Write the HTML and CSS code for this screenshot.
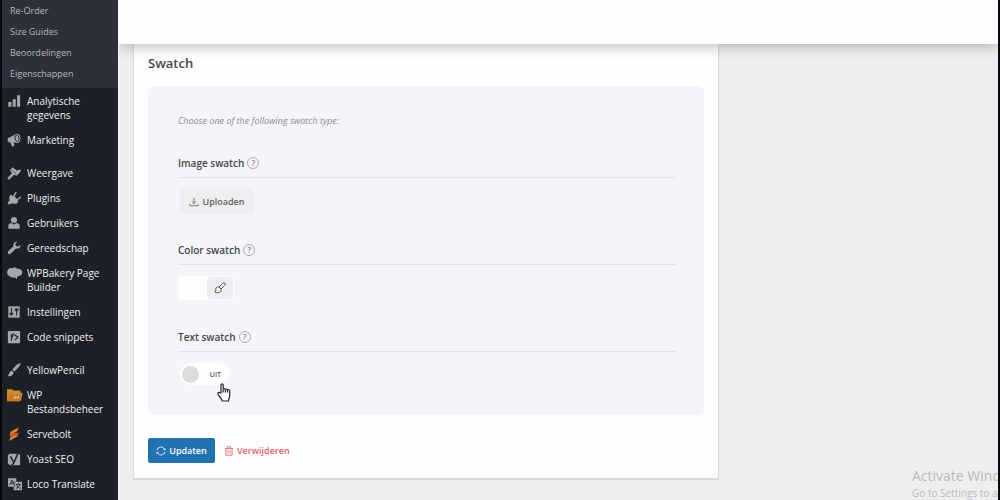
FILE: index.html
```html
<!DOCTYPE html>
<html lang="nl">
<head>
<meta charset="utf-8">
<title>Swatch</title>
<link rel="stylesheet" href="styles.css">
</head>
<body>
<div class="app">
  <nav class="sidebar" aria-label="Beheermenu">
    <ul class="submenu">
      <li><a href="#">Re-Order</a></li>
      <li><a href="#">Size Guides</a></li>
      <li><a href="#">Beoordelingen</a></li>
      <li><a href="#">Eigenschappen</a></li>
    </ul>
    <ul class="menu">
      <li><a href="#"><svg class="icon" viewBox="0 0 16 16"><path d="M1.500 9h3.500v5.500h-3.500zM6.500 6h3.500v8.500h-3.500zM11.500 1.500h3.500v13h-3.500z"/></svg><span>Analytische gegevens</span></a></li>
      <li><a href="#"><svg class="icon" viewBox="0 0 16 16"><path d="M1 6 10.500 1c3-.5 5 2 5 5s-1.500 5.500-4 5.500L7.500 10.500l1 4-2.800.8L4 10.800C1.500 11.500-.2 8 1 6z"/><ellipse cx="11.500" cy="6" rx="2.300" ry="3.700" transform="rotate(-12 11.500 6)" fill="none" stroke="#1d2127" stroke-width="1"/><path d="M10.500 5l2 .3v1.600l-1.700.3z"/></svg><span>Marketing</span></a></li>
      <li class="group-start"><a href="#"><svg class="icon" viewBox="0 0 16 16"><path d="M6.500 1.500 9 3.500 11 5l4-1 1 1.500-4.500 5.500-2-.5-1.500-.5L3 15c-1.500 1-3-.5-2-2l4.500-4.500-1-2L3.500 4.500z"/><path d="m5 4.500 6 5" stroke="#1d2127" stroke-width=".6"/></svg><span>Weergave</span></a></li>
      <li><a href="#"><svg class="icon" viewBox="0 0 16 16"><path d="m4 4 2.500 2 3-4.500c1-.8 2 .2 1.400 1.100L8.500 6l3 3 3.200-2.500c1-.6 1.800.6 1 1.400L12 10.500l1 2c-2.500 2.500-5 2.500-7 1.500L2 15.500.5 14 3 10.500C2 8 2.500 6 4 4z"/></svg><span>Plugins</span></a></li>
      <li><a href="#"><svg class="icon" viewBox="0 0 16 16"><circle cx="8" cy="4.500" r="3.500"/><path d="M1.500 14.500V11c0-2 2-3 4-3L8 10l2.500-2c2 0 4 1 4 3v3.500z"/></svg><span>Gebruikers</span></a></li>
      <li><a href="#"><svg class="icon" viewBox="0 0 16 16"><path d="M15.500 4.500c.3 3-2.500 5-5.300 4.200L4 14.700c-1.500 1.200-4-.8-2.800-2.700l6.200-6C6.500 3.200 8.800.3 11.800.8L9.500 3.500l.7 2.200 2.300.7z"/></svg><span>Gereedschap</span></a></li>
      <li><a href="#"><svg class="icon icon-wide" viewBox="0 0 18 16"><path d="M0 7c0-3 3-5.500 6-4.500 2-1.500 4.500-1 5.500.8 3-.3 6 1.500 5.800 4.200-.3 3-2.800 4.500-5.300 4L11 15l-2-2C5 13.500 0 11.500 0 7z"/></svg><span>WPBakery Page Builder</span></a></li>
      <li><a href="#"><svg class="icon" viewBox="0 0 16 16"><path d="M1.500 1.500h13v13h-13z"/><path d="M5 3.500v8M3 9l2 2.500L7 9M8.500 6h5M11 4v8M9 4.500h4" fill="none" stroke="#1d2127" stroke-width="1.200"/></svg><span>Instellingen</span></a></li>
      <li><a href="#"><svg class="icon" viewBox="0 0 16 16"><rect x="1" y="1" width="14" height="14" rx="1"/><path d="M7.500 3.500 4.500 12.500M8 5.500l4.500 2.500L9 11.500M5 4.500v4" fill="none" stroke="#1d2127" stroke-width="1.300"/></svg><span>Code snippets</span></a></li>
      <li class="group-start"><a href="#"><svg class="icon" viewBox="0 0 16 16"><path d="M15.500.5c1 1-5.500 8.500-7.500 9L6 8C7.500 5.500 13.500-.5 15.500.5zM5.500 8.800 7.500 10.500C7.500 14 4 16 .5 15c2.200-1 1.500-5.500 5-6.200z"/></svg><span>YellowPencil</span></a></li>
      <li><a href="#"><svg class="icon icon-folder" viewBox="0 0 18 16"><path d="M0 1h6l1 1.500h8v2.500h2.500l-2 8.500-2 1H0z" fill="#d38a2d"/><path d="m0 14 3-7h14.500l-2 6.500-2 1H0z" fill="#c77a22"/><path d="m8 8 1 3.500 1.500-2.500 1.500 2.500L13.500 8" fill="none" stroke="#e9ca9c"/></svg><span>WP Bestandsbeheer</span></a></li>
      <li><a href="#"><svg class="icon" viewBox="0 0 16 16"><path d="M13 .5 4 5.500 3 9.500l9-5zM13 6.500 4 11.500l-1.500 4.500L12 10.500z" fill="#e9822b"/><path d="m3.500 7 9.500-.5-.8 3.500-9 .5z" fill="#c65d22"/></svg><span>Servebolt</span></a></li>
      <li><a href="#"><svg class="icon" viewBox="0 0 16 16"><path d="M3 2h9.500l2.500 1v12H3.500L1 13V4z"/><path d="m4 5 3.200 6M12.800.5 8 12c-.7 1.800-1.500 2.500-3 2.500" fill="none" stroke="#1d2127" stroke-width="1.800"/></svg><span>Yoast SEO</span></a></li>
      <li><a href="#"><svg class="icon icon-wide" viewBox="0 0 18 16"><path d="M1 1.500h9.500V5H8v6H1z"/><path d="m3 9 2.500-5.500L8 9M4 7h3" fill="none" stroke="#1d2127"/><path d="M8.500 5.500H17v9.500H7.500v-3.500h1z"/><path d="M10 8.500h5.500M12.800 7v1.500M14.500 9c-.7 2-2.500 3.500-4.500 4M11 9.500c.7 1.500 2.500 3 4.500 3.500" fill="none" stroke="#1d2127"/></svg><span>Loco Translate</span></a></li>
    </ul>
  </nav>

  <main class="main">
    <header class="topbar"></header>
    <form class="card">
      <h1 class="card-title">Swatch</h1>
      <div class="panel">
        <p class="intro">Choose one of the following swatch type:</p>
        <section class="field">
          <h2 class="field-title">Image swatch <button type="button" class="help" aria-label="Help bij Image swatch">?</button></h2>
          <div class="field-body inset">
            <button type="button" class="upload"><svg class="line-icon" viewBox="0 0 12 12"><path d="M6 1v7M3.500 5.500 6 8l2.500-2.500M1 8.500v2h10v-2"/></svg>Uploaden</button>
          </div>
        </section>
        <section class="field">
          <h2 class="field-title">Color swatch <button type="button" class="help" aria-label="Help bij Color swatch">?</button></h2>
          <div class="field-body">
            <div class="color-picker">
              <button type="button" class="color-value" aria-label="Gekozen kleur"></button>
              <button type="button" class="color-brush" aria-label="Kleur kiezen"><svg class="line-icon" viewBox="0 0 12 12"><path d="M10.800 1.200c.8.800.3 1.600-.3 2.300L7 7 5 5l3.400-3.300c.7-.7 1.700-1.100 2.400-.5zM5 5C3.300 4.500 1.800 5.500 1.800 7.200c0 1.200-.2 2-.8 3 1.800.8 4.200.8 5.300-.4C7.200 8.900 7.400 8 7 7"/></svg></button>
            </div>
          </div>
        </section>
        <section class="field">
          <h2 class="field-title">Text swatch <button type="button" class="help" aria-label="Help bij Text swatch">?</button></h2>
          <div class="field-body inset">
            <label class="toggle"><input type="checkbox" class="toggle-input"><span>UIT</span></label>
            <svg class="cursor" viewBox="0 0 14 19"><path d="M4 10V2c0-1.400 2.200-1.400 2.200 0v4.500c.2-1.200 2-1 2.200.2.300-1 1.900-.8 2.100.3.600-.7 2.200-.4 2.200 1v4.500c0 2-1.200 3-1.200 5.500H5.200c0-2.200-3-4-4.200-7-.5-1.400 1-2.200 1.900-1.200z"/><path d="M6.200 6.500v3M8.400 7v2.500M10.500 7.500v2"/></svg>
          </div>
        </section>
      </div>
      <div class="actions">
        <button type="submit" class="update"><svg class="line-icon" viewBox="0 0 12 12"><path d="M1.200 5a4.800 4.800 0 0 1 9-1.200M10.800 7a4.800 4.800 0 0 1-9 1.200M8.800 4.500l1.900.3.700-2M3.200 7.500l-1.900-.3-.7 2"/></svg>Updaten</button>
        <button type="button" class="delete"><svg class="line-icon" viewBox="0 0 12 12"><path d="M1.200 3h9.600M4 3V1h4v2M2.300 3v8h7.400V3M4.700 5v4M7.300 5v4"/></svg>Verwijderen</button>
      </div>
    </form>
    <aside class="watermark">
      <p class="watermark-title">Activate Windows</p>
      <p class="watermark-text">Go to Settings to activate Windows.</p>
    </aside>
  </main>
</div>
</body>
</html>
```
FILE: styles.css
```css
* {
  box-sizing: border-box;
}

body {
  margin: 0;
  background: #08090c;
  color: #44474c;
  font-family: "Open Sans", "Noto Sans", sans-serif;
  font-size: 10px;
}

ul,
p,
h1,
h2 {
  margin: 0;
  padding: 0;
  list-style: none;
}

button {
  margin: 0;
  padding: 0;
  border: 0;
  background: none;
  color: inherit;
  font: inherit;
}

.app {
  display: grid;
  grid-template-columns: 116px minmax(0, 1fr);
  min-height: 100vh;
  padding: 0 2px;
}

.sidebar {
  background: #1d2127;
}

.sidebar a {
  color: #eeeff1;
  text-decoration: none;
}

.submenu {
  padding-bottom: 4px;
  background: #2c3038;
  font-size: 9px;
  line-height: 21px;
}

.submenu a {
  display: block;
  padding-left: 8px;
  color: #b4b7bb;
}

.menu a {
  display: flex;
  gap: 6px;
  padding: 6px 8px 5px 5px;
  font-size: 10px;
  line-height: 14px;
}

.menu .group-start {
  margin-top: 8px;
}

.icon {
  flex: none;
  width: 14px;
  height: 14px;
  fill: #a4a7ac;
}

.icon-wide,
.icon-folder {
  width: 16px;
  margin-right: -2px;
}

.icon-folder {
  height: 15px;
}

.main {
  position: relative;
  overflow: hidden;
  border-left: 1px solid #fafafa;
  background: #eeeef0;
}

.topbar {
  position: relative;
  height: 44px;
  background: #fefdff;
  box-shadow: 0 0 16px rgba(0, 0, 0, 0.35);
}

.card {
  width: 66.7%;
  margin-left: 14px;
  padding: 9px 14px 15px;
  border: 1px solid #dcdce0;
  border-top: 0;
  background: #fefdff;
  box-shadow: 0 1px 1px rgba(0, 0, 0, 0.1);
}

.card-title {
  margin-bottom: 13px;
  font-size: 13px;
  font-weight: 600;
  line-height: 20px;
}

.panel {
  padding: 25px 28px 5px 30px;
  border-radius: 6px;
  background: #f5f4f9;
}

.intro {
  margin-bottom: 18px;
  color: #8b8c92;
  font-size: 9px;
  font-style: italic;
  line-height: 20px;
}

.field-title {
  display: flex;
  align-items: center;
  gap: 3px;
  height: 29px;
  border-bottom: 1px solid #e2e1e6;
  font-size: 10px;
  font-weight: 600;
}

.help {
  width: 12px;
  height: 12px;
  border: 1px solid #a9aaae;
  border-radius: 50%;
  color: #85868b;
  font-size: 8px;
  line-height: 10px;
}

.field-body {
  position: relative;
  height: 58px;
  padding-top: 11px;
}

.inset {
  padding-left: 2px;
}

.line-icon {
  flex: none;
  width: 10px;
  height: 10px;
  fill: none;
  stroke: currentColor;
  stroke-width: 1;
}

.upload {
  display: flex;
  align-items: center;
  justify-content: center;
  gap: 3px;
  width: 74px;
  height: 25px;
  border-radius: 3px;
  background: #efeff1;
  color: #606166;
  font-size: 9px;
  font-weight: 600;
}

.color-picker {
  display: flex;
  width: 56px;
  height: 24px;
  padding: 1px;
  border-radius: 3px;
  background: #fefefe;
}

.color-value {
  width: 28px;
}

.color-brush {
  display: flex;
  flex: 1;
  align-items: center;
  justify-content: center;
  border-radius: 3px;
  background: #eeeef0;
  color: #56575c;
}

.color-brush .line-icon {
  width: 12px;
  height: 12px;
}

.toggle {
  display: flex;
  align-items: center;
  justify-content: space-between;
  width: 49px;
  height: 22px;
  padding: 0 8px 0 2px;
  border-radius: 11px;
  background: #fefefe;
  color: #56575c;
  font-size: 7px;
  font-weight: 600;
}

.toggle-input {
  width: 17px;
  height: 17px;
  margin: 0;
  appearance: none;
  border-radius: 50%;
  background: #dcdcde;
}

.cursor {
  position: absolute;
  top: 31px;
  left: 39px;
  width: 14px;
  height: 19px;
  fill: #fff;
  stroke: #222326;
  stroke-width: 1.2;
}

.actions {
  display: flex;
  align-items: center;
  gap: 9px;
  padding-top: 23px;
  font-size: 9px;
  font-weight: 600;
}

.update,
.delete {
  display: flex;
  align-items: center;
  gap: 3px;
  height: 25px;
}

.update {
  justify-content: center;
  width: 67px;
  border-radius: 2px;
  background: #2271b1;
  color: #fff;
}

.delete {
  color: #e46268;
}

.watermark {
  position: absolute;
  right: 0;
  bottom: 0;
  width: 86px;
  overflow: hidden;
  color: #b9b9bc;
  white-space: nowrap;
}

.watermark-title {
  font-size: 14px;
  line-height: 20px;
}

.watermark-text {
  font-size: 10px;
  line-height: 14px;
}
```
